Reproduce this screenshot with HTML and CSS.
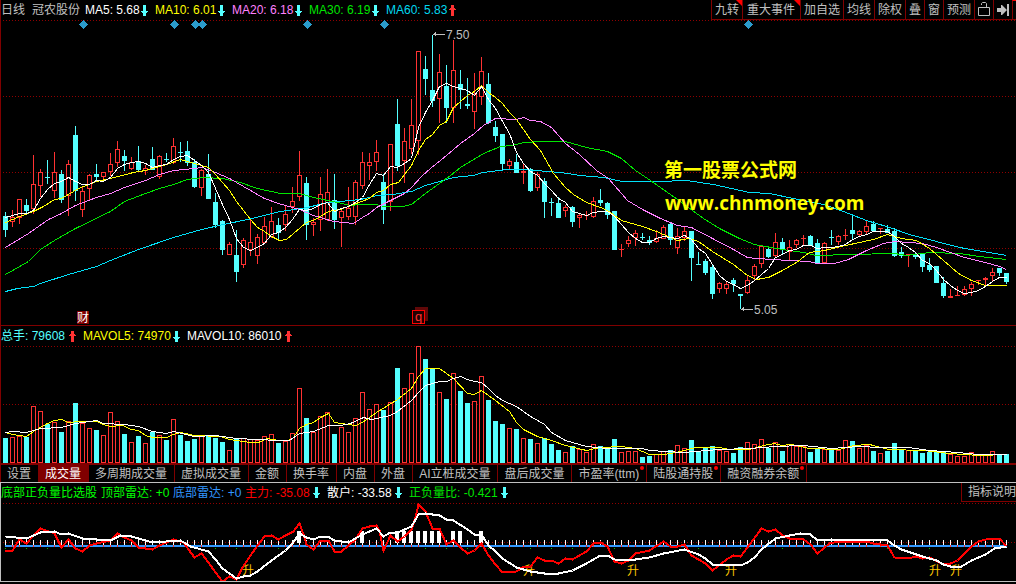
FILE: index.html
```html
<!DOCTYPE html>
<html lang="zh-CN">
<head>
<meta charset="utf-8">
<title>冠农股份 日线</title>
<link rel="stylesheet" href="styles.css">
</head>
<body>
<svg class="sprite" aria-hidden="true">
  <symbol id="down" viewBox="0 0 7 11"><path d="M2 0h3v6h2v1H6v1H5v3H2V8H1V7H0V6h2z"/></symbol>
  <symbol id="up" viewBox="0 0 7 11"><path d="M2 11h3V5h2V4H6V3H5V0H2v3H1v1H0v1h2z"/></symbol>
</svg>
<main class="terminal">
  <section class="panel price">
    <header class="bar">
      <span class="period">日线</span>
      <h1 class="stock">冠农股份</h1>
      <div class="readouts">
        <span class="readout first white">MA5: 5.68<svg class="arrow cyan"><use href="#down"/></svg></span>
        <span class="readout yellow">MA10: 6.01<svg class="arrow cyan"><use href="#down"/></svg></span>
        <span class="readout pink">MA20: 6.18<svg class="arrow cyan"><use href="#down"/></svg></span>
        <span class="readout green">MA30: 6.19<svg class="arrow cyan"><use href="#down"/></svg></span>
        <span class="readout aqua">MA60: 5.83<svg class="arrow red"><use href="#up"/></svg></span>
      </div>
      <nav class="tools">
        <button class="flag">九转</button>
        <button class="flag wide">重大事件</button>
        <button>加自选</button>
        <button>均线</button>
        <button>除权</button>
        <button>叠</button>
        <button>窗</button>
        <button>预测</button>
        <button aria-label="锁定"><svg width="12" height="15" viewBox="0 0 12 15"><path d="M.5 5.500h11v8H.5zM8.500 5V1.500l-1-1h-3l-1 1V3" fill="none" stroke="#c0c0c0"/></svg></button>
        <button aria-label="下一页"><svg width="12" height="12" viewBox="0 0 12 12"><path d="M0 4h4V1h1l5 5-5 5H4V8H0zM10 0h2v12h-2z" fill="#c0c0c0"/></svg></button>
        <span class="edge"></span>
      </nav>
    </header>
    <svg class="plot" id="price" role="img" aria-label="K线图"></svg>
  </section>
  <section class="panel volume">
    <header class="bar">
      <div class="readouts">
        <span class="readout total cyan">总手: 79608<svg class="arrow red"><use href="#up"/></svg></span>
        <span class="readout yellow">MAVOL5: 74970<svg class="arrow cyan"><use href="#down"/></svg></span>
        <span class="readout long white">MAVOL10: 86010<svg class="arrow red"><use href="#up"/></svg></span>
      </div>
    </header>
    <svg class="plot" id="volume" role="img" aria-label="成交量"></svg>
    <nav class="tabs">
      <button>设置</button>
      <button class="active">成交量</button>
      <button>多周期成交量</button>
      <button>虚拟成交量</button>
      <button>金额</button>
      <button>换手率</button>
      <button>内盘</button>
      <button>外盘</button>
      <button>AI立桩成交量</button>
      <button>盘后成交量</button>
      <button class="dot">市盈率(ttm)</button>
      <button class="dot">陆股通持股</button>
      <button class="dot">融资融券余额</button>
    </nav>
  </section>
  <section class="panel radar">
    <header class="bar">
      <div class="readouts">
        <span class="readout name lime">底部正负量比选股</span>
        <span class="readout plain lime">顶部雷达: +0</span>
        <span class="readout plain blue">底部雷达: +0</span>
        <span class="readout force deepred">主力: -35.08<svg class="arrow cyan"><use href="#down"/></svg></span>
        <span class="readout force white">散户: -33.58<svg class="arrow cyan"><use href="#down"/></svg></span>
        <span class="readout ratio green">正负量比: -0.421<svg class="arrow cyan"><use href="#down"/></svg></span>
      </div>
      <button class="help">指标说明</button>
    </header>
    <svg class="plot" id="radar" role="img" aria-label="指标图"></svg>
  </section>
</main>
<script src="chart.js"></script>
</body>
</html>
```
FILE: styles.css
```css
* { box-sizing: border-box; }
body {
  margin: 0;
  background: #000;
  color: #c0c0c0;
  font: 12px/16px "Liberation Sans", "Noto Sans CJK SC", sans-serif;
  overflow: hidden;
}
.sprite { position: absolute; width: 0; height: 0; }
.panel { display: flex; flex-direction: column; border-left: 1px solid #800000; }
.bar { display: flex; height: 20px; align-items: center; white-space: nowrap; }
.period { width: 31px; flex: none; }
.stock { margin: 0; width: 53px; flex: none; font-size: 12px; font-weight: 400; }
.readouts { display: flex; }
.readout { display: flex; align-items: center; flex: none; padding-right: 7px; }
.arrow { flex: none; width: 7px; height: 11px; margin-left: auto; fill: currentColor; shape-rendering: crispEdges; }
.price .readout { width: 77px; }
.price .first { width: 70px; }
.volume .readout { width: 104px; }
.volume .total { width: 82px; }
.volume .long { width: 112px; }
.radar .name { width: 100px; }
.radar .plain { width: 72px; }
.radar .force { width: 82px; }
.radar .ratio { width: 106px; }
.white { color: #fff; }
.yellow { color: #ff0; }
.pink { color: #ff80ff; }
.green { color: #00e600; }
.lime { color: #0f0; }
.aqua { color: #00d8f0; }
.cyan { color: #54ffff; }
.blue { color: #3296ff; }
.red { color: #ff3232; }
.deepred { color: #f00; }

button {
  margin: 0;
  border: 0;
  background: none;
  color: #c0c0c0;
  font: inherit;
  white-space: nowrap;
}
.tools { display: flex; margin-left: auto; height: 20px; border-bottom: 1px solid #800000; }
.tools button {
  position: relative;
  display: flex;
  align-items: center;
  padding: 0 3px;
  border-left: 1px solid #800000;
}
.tools svg { flex: none; }
.tools .wide { padding: 0 5px 0 4px; }
.tools .flag::after {
  content: "";
  position: absolute;
  top: 0;
  right: 0;
  border: 3px solid;
  border-color: #f00 #f00 transparent transparent;
}
.edge { width: 4px; border-left: 1px solid #800000; border-top: 1px solid #f00; }

.plot { display: block; width: 100%; shape-rendering: crispEdges; }
#price { height: 305px; }
#volume { height: 117px; }
#radar { height: 79px; }
.volume { border-top: 1px solid #800000; }
.radar { border: 1px solid #c0c0c0; border-right: 0; }
.radar .bar { height: 19px; }

.tabs { display: flex; height: 19px; border-top: 2px solid #800000; }
.tabs button { position: relative; padding: 0 7px 0 6px; border-right: 1px solid #800000; line-height: 16px; }
.tabs .active { background: #800000; color: #fff; }
.tabs .dot::after {
  content: "";
  position: absolute;
  top: 1px;
  right: 2px;
  width: 4px;
  height: 4px;
  border-radius: 2px;
  background: #f00;
}
.help {
  align-self: stretch;
  width: 55px;
  margin-left: auto;
  padding: 0 0 0 6px;
  border-left: 1px solid #800000;
  border-bottom: 1px solid #800000;
  text-align: left;
}

.grid { stroke: #900000; stroke-dasharray: 1 2; }
.line { fill: none; stroke-width: 1; }
.thick { stroke-width: 2; }
.label { fill: #c0c0c0; }
.rise { fill: #ffc800; }
.site { fill: #ff0; font-weight: 700; }
.site-name { font-size: 19px; font-family: "Noto Sans CJK SC", sans-serif; }
.site-url { font-size: 19px; font-family: "Open Sans", sans-serif; }
.badge { fill: #fff; }
.mark { fill: #ff3232; font-size: 13px; }
```
FILE: chart.js
```js
const NS = "http://www.w3.org/2000/svg";
const UP = "#ff3232", DOWN = "#54ffff", STEP = 7, FIRST = 5;

// One entry per day: direction, high, body top, body bottom, low, volume top.
const days = `c 212 216 230 237 438|r 210 217 222 227 437|r 199 199 218 224 436|c 199 205 211 215 437
r 155 184 209 214 406|r 169 172 186 197 411|c 160 177 178 184 424|r 152 172 191 198 422
c 170 174 200 203 432|r 160 164 196 216 421|c 126 135 191 201 403|r 187 191 210 217 423
r 174 175 189 200 428|c 164 174 177 180 430|r 172 172 177 182 435|r 153 164 172 176 412
r 141 149 163 167 421|c 150 156 161 171 434|r 157 162 169 170 442|c 146 161 170 172 436
r 165 168 171 175 443|c 147 159 170 170 432|r 155 156 177 179 435|c 153 159 160 162 440
r 138 146 163 164 419|c 142 152 153 162 435|c 141 151 163 166 441|c 159 162 187 188 439
r 169 170 188 196 435|c 154 174 199 199 436|c 193 202 225 228 438|c 220 221 250 255 442
r 242 244 255 255 450|c 230 255 272 282 439|r 238 240 265 268 438|r 219 242 250 256 439
r 234 237 256 264 440|r 217 226 243 243 436|r 207 221 237 238 434|c 218 225 233 239 443
r 206 214 225 231 441|r 187 201 207 213 433|r 151 175 197 201 388|c 177 183 225 240 418
r 218 222 225 236 432|r 177 194 220 231 416|r 169 192 220 221 412|c 174 200 220 229 434
r 210 211 218 247 427|r 187 208 217 220 432|r 180 182 217 225 418|r 152 162 186 189 392
r 153 162 166 180 409|r 140 152 162 171 404|c 174 182 210 224 410|r 144 144 202 211 402
c 99 124 166 171 368|r 128 141 161 183 388|r 99 125 149 154 373|r 51 51 141 155 346
c 56 69 79 95 359|c 35 90 101 107 369|r 54 72 99 123 392|c 65 86 108 123 399
r 40 70 108 123 373|c 70 84 90 109 391|c 78 104 106 109 403|r 73 94 112 129 401
r 57 71 97 105 376|c 73 84 123 124 400|c 121 127 136 142 421|c 134 134 164 171 424
r 159 161 166 169 428|c 154 162 173 173 429|r 164 171 173 184 438|c 168 169 191 192 439
r 172 174 188 191 443|c 178 181 202 218 438|c 198 202 203 216 444|c 197 203 218 218 450
r 205 207 211 217 452|c 206 207 222 227 446|r 213 215 218 228 449|r 211 215 216 220 452
r 197 201 217 218 444|c 189 200 203 206 446|c 202 203 215 219 447|c 211 211 250 250 439
r 244 249 250 257 452|r 236 240 244 247 451|r 230 233 238 246 451|c 233 237 238 240 457
c 236 240 243 245 456|r 230 238 242 243 454|r 225 227 239 239 451|c 223 224 240 245 450
r 228 236 248 254 445|r 227 231 238 241 448|c 231 231 258 281 440|c 252 264 265 265 451
c 259 261 273 275 447|c 265 267 294 299 446|r 282 283 289 293 450|r 282 284 289 294 451
c 278 280 284 292 453|c 294 294 296 309 447|r 276 280 293 294 442|r 264 266 276 281 444
r 245 246 264 268 439|c 247 249 257 258 448|r 233 242 256 257 442|c 238 242 249 255 451
r 240 247 252 260 444|r 239 240 245 248 446|r 235 238 239 246 446|c 235 236 246 246 452
c 239 243 264 264 449|r 242 243 263 264 449|c 230 237 238 245 448|r 235 236 242 245 450
r 229 235 236 240 440|c 216 230 234 240 441|r 230 231 235 237 448|r 220 226 232 234 445
c 221 224 231 231 451|r 228 228 229 234 453|c 225 229 233 233 451|c 228 231 256 257 443
c 247 252 256 258 450|r 254 254 255 267 450|c 252 255 257 259 451|c 253 253 267 272 453
c 258 265 270 272 452|c 266 266 283 283 452|c 277 283 296 298 452|r 289 296 298 298 454
r 286 295 296 296 456|r 286 289 295 296 456|r 282 284 289 296 452|r 280 280 281 285 455
r 277 278 280 285 455|r 268 272 276 281 451|c 268 268 273 276 454|c 273 273 282 284 454`
  .split(/[|\n]/).map(s => { const [d, ...n] = s.trim().split(" "); return [d, ...n.map(Number)]; });

const ma5 = [217,215,213,213,210,198,189,183,181,177,181,184,184,180,181,177,168,164,162,161,163,167,165,164,159,156,155,160,165,172,188,204,219,238,247,250,247,243,234,232,227,219,209,210,208,204,202,211,208,206,202,197,184,173,175,166,167,163,158,127,112,100,86,83,86,88,90,95,86,99,108,121,133,152,163,171,175,183,190,198,202,211,213,215,212,211,211,216,224,232,238,242,242,238,236,237,238,235,239,248,253,264,275,281,284,288,285,280,274,268,257,254,250,249,245,245,248,247,247,246,244,239,236,234,231,231,231,236,243,247,252,260,263,270,279,285,290,293,292,290,286,281,277,277]
  .map((y, i) => `${FIRST + i * STEP},${y}`).join(" ");
const ma10 = "5,222 19,216 33,211 43,206 54,199 61,198 68,194 78,188 96,181 110,178 133,172 145,170 166,164 180,159 194,163 208,167 215,174 229,190 236,201 250,219 257,227 264,231 271,236 279,240 286,239 293,233 300,227 306,222 315,219 328,211 340,209 353,204 369,198 376,192 383,190 390,184 398,182 404,174 411,165 418,150 425,139 432,134 439,125 446,121 453,107 460,101 467,95 474,91 481,85 488,92 495,97 502,103 509,112 516,119 523,129 530,139 540,150 553,173 565,187 573,194 586,202 600,207 607,210 614,215 621,220 642,226 656,231 670,237 677,240 689,238 698,241 712,251 733,264 747,275 756,279 768,277 782,270 796,262 809,252 824,250 845,245 873,239 887,234 901,238 916,240 929,248 943,260 958,273 971,280 985,285 1006,285";
const ma20 = "5,247 28,233 48,219 61,213 75,205 96,197 110,193 124,187 145,180 159,174 173,170 194,168 202,167 215,172 229,178 250,190 264,198 278,203 299,209 313,215 333,221 353,223 362,217 369,213 376,207 404,193 411,187 422,175 430,168 446,155 460,143 474,133 483,125 495,118 516,119 523,117 530,120 540,121 551,127 565,143 579,154 596,170 608,178 627,200 642,209 660,218 677,225 691,227 712,238 733,249 747,257 756,258 789,260 809,261 816,263 834,263 848,259 866,250 883,243 894,241 922,243 936,247 950,252 964,257 985,262 999,266 1006,269";
const ma30 = "5,274 28,261 40,249 54,240 75,228 110,211 124,201 145,193 159,188 173,184 187,179 203,177 222,178 240,182 257,188 280,193 299,193 313,197 337,202 350,205 360,204 376,204 383,206 402,206 411,204 425,193 450,175 460,167 483,153 500,146 512,145 523,142 543,141 565,141 586,147 607,151 621,158 635,170 650,180 677,199 703,218 719,228 739,238 754,244 782,249 803,252 816,255 849,254 894,253 906,255 929,252 959,253 979,256 1006,259";
const ma60 = "5,291 17,288 33,286 40,283 68,274 96,266 110,260 138,249 173,237 201,229 223,224 247,219 280,211 307,207 327,202 340,201 360,199 377,195 393,194 411,191 425,185 453,177 473,175 482,172 507,169 523,169 560,172 580,175 603,177 622,181 657,181 686,180 713,184 749,192 769,193 793,198 823,204 843,211 866,220 886,226 909,234 936,241 959,247 1006,255";
const vol5 = "5,432 12,434 26,436 33,431 40,427 47,423 54,420 61,419 68,422 80,421 96,421 103,424 110,426 122,425 131,429 138,430 145,435 152,437 166,437 173,434 180,432 194,435 220,436 229,439 250,442 258,442 267,438 278,440 288,440 293,437 299,428 306,424 313,422 320,417 328,413 334,422 355,425 362,422 376,412 397,399 411,388 418,376 425,368 439,368 453,378 467,393 474,394 481,390 495,400 509,411 516,422 523,429 537,436 551,440 565,445 586,450 600,447 621,446 635,448 649,454 663,454 676,452 683,450 696,447 719,447 729,449 749,449 763,445 774,443 781,445 791,444 809,448 839,449 853,445 869,444 888,449 923,450 949,453 979,455 1006,454";
const vol10 = "5,432 12,431 26,432 40,428 61,427 75,423 96,420 103,423 124,424 138,426 152,431 166,433 173,431 194,436 215,435 236,438 278,440 289,440 299,433 313,431 328,425 340,425 350,423 363,417 371,419 390,415 397,411 411,400 418,392 425,385 439,381 446,381 453,378 460,376 467,379 474,381 481,382 488,388 495,395 502,400 516,406 530,416 544,424 551,432 565,440 586,446 607,448 642,448 649,450 683,452 719,449 749,448 775,446 803,445 831,448 859,446 880,447 908,447 929,450 957,452 978,454 1006,454";
const force = "5,551 12,550 19,539 26,543 33,535 40,528 54,533 61,547 68,539 75,548 82,551 89,545 96,543 110,540 117,533 124,537 131,540 138,547 152,549 159,545 173,539 183,542 188,549 194,557 201,553 208,562 215,572 222,581 229,576 236,579 242,567 250,555 257,545 264,536 271,535 278,539 285,535 293,531 299,523 303,534 306,544 313,549 320,540 328,540 334,551 341,551 355,539 362,528 369,526 376,525 379,530 383,550 390,535 397,541 404,536 411,529 415,517 418,504 425,511 432,528 439,528 446,544 453,540 460,547 467,553 474,550 481,543 488,555 495,564 502,572 516,571 523,566 530,566 537,557 544,560 551,560 558,563 565,558 572,559 579,555 586,551 593,543 600,542 607,546 614,561 621,563 628,560 635,553 649,550 663,541 670,546 677,546 684,544 691,555 705,563 712,570 726,559 733,555 740,556 747,547 761,528 768,531 775,529 782,535 789,538 803,539 810,544 817,553 829,543 838,541 866,541 873,543 887,545 894,557 908,558 915,556 922,558 929,557 943,564 950,563 957,560 971,546 978,541 989,538 999,538 1006,546";
const retail = "5,536 26,538 33,535 40,532 54,531 61,534 68,533 82,538 110,540 120,535 131,536 152,542 166,541 180,540 190,546 208,551 215,559 222,568 236,578 243,576 250,575 257,571 271,560 285,550 292,543 299,533 306,537 313,539 320,536 327,536 334,540 348,542 362,534 376,528 383,536 390,532 397,532 404,529 411,526 418,514 425,513 439,515 446,519 453,520 467,529 474,534 481,534 488,545 495,551 502,558 516,567 530,571 544,573 558,573 572,570 586,563 600,555 607,555 614,559 628,560 649,557 663,553 684,549 698,554 705,558 712,564 733,564 740,565 747,562 754,557 761,549 775,538 789,535 800,533 810,534 817,540 831,539 887,540 894,545 901,549 922,556 936,560 943,564 950,566 961,566 971,560 985,554 994,548 1006,546";

// The plots share one vertical scale; each starts at its own offset.
function layer(id, top) {
  const g = document.createElementNS(NS, "g");
  g.setAttribute("transform", `translate(-1 ${-top})`);
  document.getElementById(id).append(g);
  return (tag, attrs, text) => {
    const e = document.createElementNS(NS, tag);
    for (const k in attrs) e.setAttribute(k, attrs[k]);
    if (text) e.textContent = text;
    g.append(e);
  };
}
const rect = (add, x, y, width, height, fill) => add("rect", { x, y, width, height, fill });
const grid = (add, ...ys) => ys.forEach(y => add("line", { x1: 3, x2: "110%", y1: y + .5, y2: y + .5, class: "grid" }));
const line = (add, points, stroke, cls = "") => add("polyline", { points, stroke, class: "line " + cls, transform: "translate(.5 .5)" });
const text = (add, x, y, cls, s) => add("text", { x, y, class: cls }, s);
const box = (add, x, top, bottom) => add("rect", { x: x - 1.5, y: top + .5, width: 4, height: Math.max(bottom - top - 1, 1), fill: "#000", stroke: UP });

const price = layer("price", 20);
grid(price, 20, 96, 172, 248);
days.forEach(([dir, high, top, bottom, low], i) => {
  const x = FIRST + i * STEP, color = dir === "r" ? UP : DOWN;
  rect(price, x, high, 1, Math.max(top - high, 0), color);
  rect(price, x, bottom, 1, Math.max(low - bottom, 0), color);
  if (dir === "r" && bottom - top > 2) box(price, x, top, bottom);
  else rect(price, x - 2, top, 5, bottom - top, color);
});
line(price, ma60, "#00e0f8");
line(price, ma30, "#00e600");
line(price, ma20, "#ff80ff");
line(price, ma10, "#ffff00");
line(price, ma5, "#ffffff");
[83, 174, 195, 202, 307, 384, 748].forEach(x => price("path", { d: `M${x - 4} 24.500l4.500-4.500 4.500 4.500-4.500 4.500z`, fill: "#2b9bcb" }));
price("path", { d: "M433 34h12v1h-12zM433 34l3-2v5z", fill: "#c0c0c0" });
text(price, 446, 39, "label", "7.50");
price("path", { d: "M741 309h12v1h-12zM741 309l3-2v5z", fill: "#c0c0c0" });
text(price, 754, 314, "label", "5.05");
rect(price, 77, 311, 12, 13, "#800000");
text(price, 77, 322, "badge", "财");
rect(price, 415, 307, 13, 14, "#600808");
price("rect", { x: 412.5, y: 310.5, width: 12, height: 13, fill: "#200000", stroke: "#ff0000" });
text(price, 415, 321, "mark", "q");
text(price, 664, 177, "site site-name", "第一股票公式网");
text(price, 665, 210, "site site-url", "www.chnmoney.com");

const volume = layer("volume", 346);
grid(volume, 346, 404);
days.forEach(([dir, , , , , top], i) => {
  const x = FIRST + i * STEP;
  if (dir === "r") box(volume, x, top, 463);
  else rect(volume, x - 2, top, 5, 463 - top, DOWN);
});
line(volume, vol5, "#ffff00");
line(volume, vol10, "#ffffff");

const radar = layer("radar", 502);
grid(radar, 503, 542);
[42, 51, 56, 57, 58, 59, 60, 61, 62, 64, 65, 68].forEach(i => rect(radar, FIRST + i * STEP - 2, 531, 4, 12, "#fff"));
days.forEach((d, i) => rect(radar, FIRST + i * STEP, 540, 1, 5, "#fff"));
rect(radar, FIRST, 545, 1002, 2, "#3296ff");
days.forEach(([dir], i) => {
  if (dir === "r") rect(radar, FIRST + i * STEP, 545, 1, 2, UP);
  else if (i % 3 === 0) rect(radar, FIRST + i * STEP, 548, 1, 1, "#00c800");
});
[248, 529, 633, 731, 935, 956].forEach(x => text(radar, x - 6, 575, "rise", "升"));
line(radar, force, "#ff0000", "thick");
line(radar, retail, "#ffffff", "thick");
```
